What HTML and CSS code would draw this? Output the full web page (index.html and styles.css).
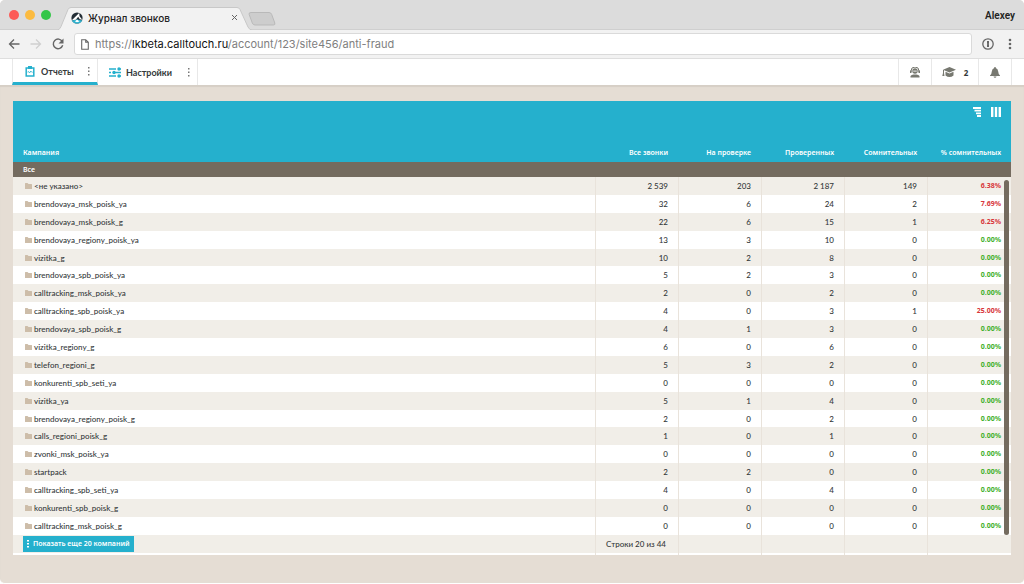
FILE: index.html
```html
<!DOCTYPE html>
<html lang="ru">
<head>
<meta charset="utf-8">
<title>Журнал звонков</title>
<link rel="stylesheet" href="styles.css">
</head>
<body>
<div class="window">
  <header class="tabstrip">
    <div class="lights"><i class="light red"></i><i class="light yellow"></i><i class="light green"></i></div>
    <div class="tab">
      <svg class="tab-shape" viewBox="0 0 194 23" preserveAspectRatio="none" aria-hidden="true"><path d="M0 23Q2 22 3 19.500L10 2.500Q11 .5 13 .5H179Q181 .5 182 2.500L190 20Q191.500 23 194 23" fill="#f2f2f2" stroke="#c8c8c8"/></svg>
      <svg class="favicon" viewBox="0 0 12 12" aria-hidden="true"><circle cx="6" cy="6" r="5.600" fill="#232d35"/><path d="M.6 8.500 6 7.500l5.400 1Q9.500 11.600 6 11.600T.6 8.500" fill="#2fb3d0"/><path d="M.8 8.300 8.200 1l.3 3.200 2.800 3.600-2.500-.6-1.600-2.400-2.400 3z" fill="#fff"/><path d="m4 9.500 2-2 2.500 2-2.500.8z" fill="#fff"/></svg>
      <span class="tab-title">Журнал звонков</span>
      <button class="tab-close" aria-label="Закрыть"><svg viewBox="0 0 7 7" width="7" height="7"><path d="m1 1 5 5m0-5L1 6" stroke="#666" fill="none"/></svg></button>
    </div>
    <button class="new-tab" aria-label="Новая вкладка"><svg viewBox="0 0 28 14" width="28" height="14"><path d="M3 .5h18q2 0 2.700 2l3.100 8.500q.700 2-1.500 2H7q-2 0-2.700-2L1.200 2.500Q.5.500 3 .5z" fill="#cdcdcd" stroke="#b9b9b9"/></svg></button>
    <span class="profile">Alexey</span>
  </header>
  <nav class="toolbar">
    <button class="tool" aria-label="Назад"><svg viewBox="0 0 12 12" width="12" height="12"><path d="M11.500 6H1.500m4.500-4.500L1.500 6 6 10.500" fill="none" stroke="#666" stroke-width="1.300"/></svg></button>
    <button class="tool" aria-label="Вперед" disabled><svg viewBox="0 0 12 12" width="12" height="12"><path d="M.5 6h10M6 1.500 10.500 6 6 10.500" fill="none" stroke="#d0d0d0" stroke-width="1.300"/></svg></button>
    <button class="tool" aria-label="Обновить"><svg viewBox="0 0 12 12" width="12" height="12"><path d="M10.300 3.500A4.800 4.800 0 1 0 10.700 7.300" fill="none" stroke="#666" stroke-width="1.400"/><path d="M11.500.5v5h-5z" fill="#666"/></svg></button>
    <div class="address">
      <svg viewBox="0 0 8 11" width="8" height="11" aria-hidden="true"><path d="M.7.700h4l2.600 2.600v7H.7zM4.700.700v2.600h2.600" fill="none" stroke="#666" stroke-width="1.100"/></svg>
      <span class="url">https://<b>lkbeta.calltouch.ru</b>/account/123/site456/anti-fraud</span>
    </div>
    <button class="tool" aria-label="Расширение"><svg viewBox="0 0 12 12" width="12" height="12"><circle cx="6" cy="6" r="5.200" fill="none" stroke="#666" stroke-width="1.300"/><path d="M5 3h2v2.500l-.4.500.4.500V9H5V6.500L5.400 6 5 5.500z" fill="#666"/></svg></button>
    <button class="tool more" aria-label="Меню"><svg viewBox="0 0 4 12" width="4" height="12" fill="#666"><circle cx="2" cy="2" r="1.300"/><circle cx="2" cy="6" r="1.300"/><circle cx="2" cy="10" r="1.300"/></svg></button>
  </nav>
  <nav class="appbar">
    <a class="section active" href="#reports">
      <svg viewBox="0 0 10 11" width="10" height="11"><path d="M1.200 2h7.600v8H1.200z" fill="none" stroke="#25b0cd" stroke-width="1.500"/><path d="M3 0h4v3H3z" fill="#25b0cd"/><path d="m2.500 6 1-.5 1 1.500 1.300-2 1 1.200h.8" fill="none" stroke="#25b0cd" stroke-width=".8"/></svg>
      <span>Отчеты</span>
      <svg class="dots" viewBox="0 0 3 9" width="3" height="9"><path d="M1 0h1.500v1.500H1zM1 3.500h1.500V5H1zM1 7h1.500v1.500H1z" fill="#777"/></svg>
    </a>
    <a class="section settings" href="#settings">
      <svg viewBox="0 0 12 11" width="12" height="11"><path d="M0 2h7m4 0h1M0 5.500h2m4 0h6M0 9h7m4 0h1" stroke="#25b0cd" stroke-width="1.500"/><circle cx="10" cy="2" r="1.700" fill="#25b0cd"/><circle cx="5" cy="5.500" r="1.700" fill="#25b0cd"/><circle cx="10" cy="9" r="1.700" fill="#25b0cd"/></svg>
      <span>Настройки</span>
      <svg class="dots" viewBox="0 0 3 9" width="3" height="9"><path d="M1 0h1.500v1.500H1zM1 3.500h1.500V5H1zM1 7h1.500v1.500H1z" fill="#777"/></svg>
    </a>
    <div class="actions">
      <button class="action" aria-label="Поддержка"><svg viewBox="0 0 12 11" width="12" height="11"><circle cx="6" cy="4" r="2.700" fill="#777870"/><path d="M2 5V4a4 4 0 0 1 8 0v1" fill="none" stroke="#777870"/><path d="M1 3.500h1.500V6H1zM9.500 3.500H11V6H9.500zM1.500 10.500V9q1-1.500 3-1.500h3q2 0 3 1.500v1.500z" fill="#777870"/><path d="M4.500 3.500h1.200v1.200H4.500zM6.300 3.500h1.200v1.200H6.300z" fill="#fff"/></svg></button>
      <button class="action learn"><svg viewBox="0 0 14 11" width="14" height="11" aria-hidden="true"><path d="M7.500 0 14 2.800 7.500 5.600 1 2.800zM3.500 4.800l4 1.700 4-1.700v3.700q-2 1.500-4 1.500t-4-1.500zM1 3h1v3l.5 3H.3L1 6z" fill="#777870"/></svg><span>2</span></button>
      <button class="action" aria-label="Уведомления"><svg viewBox="0 0 10 11" width="10" height="11"><path d="M4.300 0h1.400v1Q8 1.500 8.200 4.500 8.300 7 10 8.500V9H0v-.5Q1.700 7 1.800 4.500 2 1.500 4.300 1zM3.500 9.500h3q-.3 1.300-1.500 1.300t-1.500-1.300" fill="#777870"/></svg></button>
    </div>
  </nav>
  <main class="page">
    <section class="panel">
      <div class="views">
        <button aria-label="Дерево"><svg viewBox="0 0 8 10" width="8" height="10" fill="#fff"><path d="M0 0h8v2H0zM1.500 2.800H8v1.800H1.500zM3 5.400h5v1.800H3zM4 8h4v2H4z"/></svg></button>
        <button aria-label="Столбцы"><svg viewBox="0 0 10 10" width="10" height="10" fill="#fff"><path d="M0 0h2.400v10H0zM3.800 0h2.400v10H3.800zM7.600 0H10v10H7.600z"/></svg></button>
      </div>
      <table class="report">
        <colgroup><col><col class="num"><col class="num"><col class="num"><col class="num"><col class="share"></colgroup>
        <thead>
          <tr class="head"><th>Кампания</th><th>Все звонки</th><th>На проверке</th><th>Проверенных</th><th>Сомнительных</th><th>% сомнительных</th></tr>
          <tr class="group"><th colspan="6">Все</th></tr>
        </thead>
        <tbody id="rows"></tbody>
        <tfoot>
          <tr class="foot"><td><button class="show-more"><svg viewBox="0 0 2 8" width="2" height="8" fill="#fff" aria-hidden="true"><path d="M0 0h2v1.500H0zM0 3h2v1.500H0zM0 6h2v1.500H0z"/></svg>Показать еще 20 компаний</button></td><td class="count">Строки 20 из 44</td><td></td><td></td><td></td><td></td></tr>
          <tr class="tail"><td></td><td></td><td></td><td></td><td></td><td></td></tr>
        </tfoot>
      </table>
      <div class="scroll-thumb"></div>
    </section>
  </main>
</div>
<script src="rows.js"></script>
</body>
</html>
```

FILE: styles.css
```css
* { box-sizing: border-box; }
body { margin: 0; background: #fff; font-family: Lato, sans-serif; color: #34393a; }
button { border: 0; padding: 0; background: none; font: inherit; color: inherit; display: flex; align-items: center; }
svg { display: block; flex: none; }

.window { height: 100vh; min-height: 520px; padding-bottom: 1px; display: flex; flex-direction: column; background: #e5ddd4; border-bottom: 1px solid #fff; border-radius: 5px; overflow: hidden; }

.tabstrip { height: 30px; flex: none; display: flex; align-items: center; padding: 0 9px; background: #dcdcdc; border-bottom: 1px solid #cfcfcf; }
.lights { display: flex; gap: 6px; width: 49px; }
.light { width: 10px; height: 10px; border-radius: 50%; }
.red { background: #fc5b57; }
.yellow { background: #fcbb40; }
.green { background: #34c648; }
.tab { position: relative; align-self: flex-end; width: 194px; height: 23px; margin-bottom: -1px; padding: 0 14px 2px 13px; display: flex; align-items: center; gap: 5px; font: 500 10px Inter, sans-serif; color: #222; }
.tab-shape { position: absolute; inset: 0; width: 100%; height: 100%; }
.favicon { position: relative; width: 12px; height: 12px; }
.tab-title { position: relative; flex: 1; }
.tab-close { position: relative; }
.new-tab { align-self: flex-end; margin: 0 0 3px -4px; }
.profile { margin-left: auto; padding-top: 2px; font: 600 10px Roboto, sans-serif; color: #222; }

.toolbar { height: 29px; flex: none; display: flex; align-items: center; gap: 10px; padding: 0 12px 0 8px; background: #f2f2f2; border-bottom: 1px solid #dedede; }
.address { flex: 1; height: 22px; display: flex; align-items: center; gap: 6px; padding: 0 6px; background: #fff; border: 1px solid #dadada; border-radius: 3px; }
.url { font: 11px Inter, sans-serif; color: #808080; }
.url b { font-weight: 400; color: #111; }
.more { margin-left: 4px; }

.appbar { height: 26px; flex: none; display: flex; padding-left: 12px; background: #fff; font-size: 9px; font-weight: 700; }
.section { display: flex; align-items: center; gap: 7px; padding: 0 7px 0 12px; width: 86px; border: solid #e8e8e8; border-width: 0 1px; color: inherit; text-decoration: none; }
.section.active { gap: 6px; border-bottom: 3px solid #25b0cd; }
.section.settings { width: 100px; gap: 5px; padding: 2px 7px 2px 11px; border-left: 0; }
.section.active { padding-top: 2px; }
.dots { margin-left: auto; }
.actions { margin-left: auto; display: flex; padding-right: 12px; }
.action { width: 33px; justify-content: center; gap: 8px; border-left: 1px solid #e8e8e8; }
.action:last-child { width: 34px; border-right: 1px solid #e8e8e8; }
.action.learn { width: 47px; font: 700 8px "Noto Sans", sans-serif; }

.page { flex: 1; min-height: 0; padding: 16px 13px 27px; display: grid; box-shadow: inset 0 2px 1px #d6cfc6; }
.panel { position: relative; display: grid; min-height: 0; }
.views { position: absolute; top: 6px; right: 10px; display: flex; gap: 10px; }

.report { width: 100%; height: 100%; border-collapse: separate; border-spacing: 0; table-layout: fixed; background: #fff; font-size: 8px; line-height: 10px; }
.report col.num { width: 83px; }
.report col.share { width: 84px; }
.report th, .report td { padding: 0 10px; text-align: right; vertical-align: middle; white-space: nowrap; }
.report tr > :first-child { text-align: left; }
.report th, .show-more, .report .good, .report .bad { font-family: "Noto Sans", sans-serif; font-size: 7px; font-weight: 600; }
.head th { height: 61px; padding-bottom: 4px; vertical-align: bottom; background: #25b0cd; color: #fff; }
.group th { height: 15px; background: #746b5f; color: #fff; }
.report td { font-weight: 500; border-left: 1px solid #e9e3db; }
.report td:first-child { padding-left: 12px; border-left: 0; }
.report tbody tr:nth-child(odd), .foot { background: #f1eee8; }
.name { display: flex; align-items: center; gap: 2px; }
.report .bad { color: #d8363b; font-weight: 700; }
.report .good { color: #44b02c; font-weight: 700; }
.report .foot td { height: 18px; }
.report .foot td:first-child { padding-left: 10px; }
.report .tail td { height: 2px; }
.report .foot .count { padding-right: 16px; }
.show-more { height: 16px; width: 111px; padding: 0 4px; gap: 4px; background: #25b0cd; color: #fff; white-space: nowrap; }
.scroll-thumb { position: absolute; top: 79px; right: 2px; bottom: 20px; width: 5px; border-radius: 3px; background: #746b5f; }
```

FILE: rows.js
```js
const data = [
  ['<не указано>', '2 539', 203, '2 187', 149, '6.38%'],
  ['brendovaya_msk_poisk_ya', 32, 6, 24, 2, '7.69%'],
  ['brendovaya_msk_poisk_g', 22, 6, 15, 1, '6.25%'],
  ['brendovaya_regiony_poisk_ya', 13, 3, 10, 0, '0.00%'],
  ['vizitka_g', 10, 2, 8, 0, '0.00%'],
  ['brendovaya_spb_poisk_ya', 5, 2, 3, 0, '0.00%'],
  ['calltracking_msk_poisk_ya', 2, 0, 2, 0, '0.00%'],
  ['calltracking_spb_poisk_ya', 4, 0, 3, 1, '25.00%'],
  ['brendovaya_spb_poisk_g', 4, 1, 3, 0, '0.00%'],
  ['vizitka_regiony_g', 6, 0, 6, 0, '0.00%'],
  ['telefon_regioni_g', 5, 3, 2, 0, '0.00%'],
  ['konkurenti_spb_seti_ya', 0, 0, 0, 0, '0.00%'],
  ['vizitka_ya', 5, 1, 4, 0, '0.00%'],
  ['brendovaya_regiony_poisk_g', 2, 0, 2, 0, '0.00%'],
  ['calls_regioni_poisk_g', 1, 0, 1, 0, '0.00%'],
  ['zvonki_msk_poisk_ya', 0, 0, 0, 0, '0.00%'],
  ['startpack', 2, 2, 0, 0, '0.00%'],
  ['calltracking_spb_seti_ya', 4, 0, 4, 0, '0.00%'],
  ['konkurenti_spb_poisk_g', 0, 0, 0, 0, '0.00%'],
  ['calltracking_msk_poisk_g', 0, 0, 0, 0, '0.00%']
];
const folder = '<svg viewBox="0 0 7 6" width="7" height="6" aria-hidden="true"><path d="M0 .5Q0 0 .5 0h2l1 1h3q.5 0 .5.500V6H0z" fill="#cdbda9"/></svg>';
const body = document.getElementById('rows');
for (const [name, ...values] of data) {
  const row = body.insertRow();
  const first = row.insertCell();
  first.innerHTML = `<div class="name">${folder}<span></span></div>`;
  first.querySelector('span').textContent = name;
  for (const value of values) row.insertCell().textContent = value;
  row.lastElementChild.className = values[4] === '0.00%' ? 'good' : 'bad';
}
```
